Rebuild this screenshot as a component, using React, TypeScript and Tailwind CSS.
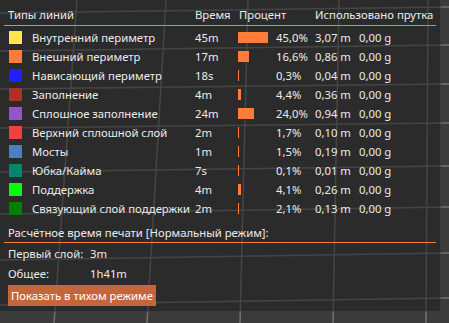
import React from 'react';

type Row = {
  color: string;
  label: string;
  time: string;
  pct: number;
  pctText: string;
  meters: string;
  grams: string;
};

const rows: Row[] = [
  { color: '#FFE64D', label: 'Внутренний периметр', time: '45m', pct: 45.0, pctText: '45,0%', meters: '3,07 m', grams: '0,00 g' },
  { color: '#FF7D38', label: 'Внешний периметр', time: '17m', pct: 16.6, pctText: '16,6%', meters: '0,86 m', grams: '0,00 g' },
  { color: '#1F1FFF', label: 'Нависающий периметр', time: '18s', pct: 0.3, pctText: '0,3%', meters: '0,04 m', grams: '0,00 g' },
  { color: '#B03029', label: 'Заполнение', time: '4m', pct: 4.4, pctText: '4,4%', meters: '0,36 m', grams: '0,00 g' },
  { color: '#9654CC', label: 'Сплошное заполнение', time: '24m', pct: 24.0, pctText: '24,0%', meters: '0,94 m', grams: '0,00 g' },
  { color: '#F04040', label: 'Верхний сплошной слой', time: '2m', pct: 1.7, pctText: '1,7%', meters: '0,10 m', grams: '0,00 g' },
  { color: '#4D80BA', label: 'Мосты', time: '1m', pct: 1.5, pctText: '1,5%', meters: '0,19 m', grams: '0,00 g' },
  { color: '#00876E', label: 'Юбка/Кайма', time: '7s', pct: 0.1, pctText: '0,1%', meters: '0,01 m', grams: '0,00 g' },
  { color: '#00FF00', label: 'Поддержка', time: '4m', pct: 4.1, pctText: '4,1%', meters: '0,26 m', grams: '0,00 g' },
  { color: '#008000', label: 'Связующий слой поддержки', time: '2m', pct: 2.1, pctText: '2,1%', meters: '0,13 m', grams: '0,00 g' },
];

// bed grid seen through the overlay
const gridLines = [
  [77, 0, 54, 323],
  [166, 0, 147, 323],
  [248, 0, 240, 323],
  [339, 0, 333, 323],
  [428, 0, 426, 323],
  [0, 13, 449, 7],
  [0, 51, 449, 45],
  [0, 89, 449, 84],
  [0, 128, 449, 123],
  [0, 172, 449, 166],
  [0, 214, 449, 207],
  [0, 260, 449, 253],
  [0, 305, 449, 298],
];

const cols = 'grid grid-cols-[187px_43px_38px_39px_44px_auto] items-center';

export default function App() {
  return (
    <div
      className="relative w-[449px] h-[323px] overflow-hidden bg-[#3b3b3b] text-[11.3px] text-[#ebebeb] whitespace-nowrap"
      style={{ fontFamily: '"Noto Sans", "DejaVu Sans", sans-serif' }}
    >
      <svg className="absolute inset-0" width="449" height="323">
        {gridLines.map(([x1, y1, x2, y2], i) => (
          <line key={i} x1={x1} y1={y1} x2={x2} y2={y2} stroke="#727272" strokeWidth="1.5" />
        ))}
      </svg>

      <div className="relative w-[441px] h-[312px] bg-[rgba(28,28,28,0.52)] border-r border-b border-[rgba(255,255,255,0.08)] pt-[5px] px-[4px]">
        <div className={`${cols} h-[19px] pl-[4px] leading-[19px]`}>
          <span>Типы линий</span>
          <span>Время</span>
          <span className="col-span-2 pl-[1px]">Процент</span>
          <span className="col-span-2">Использовано прутка</span>
        </div>
        <div className="mt-[1px] h-px bg-[#ff7d38]" />

        <div className="mt-[2px] pl-[4px]">
          {rows.map((r) => (
            <div key={r.label} className={`${cols} h-[19px] leading-[19px]`}>
              <div className="flex items-center">
                <span className="ml-[1px] w-[13px] h-[13px] shrink-0" style={{ backgroundColor: r.color }} />
                <span className="ml-[10px]">{r.label}</span>
              </div>
              <span>{r.time}</span>
              <div className="flex items-center h-full">
                <span className="h-[11px] bg-[#ff7d38]" style={{ width: Math.max(1, r.pct * 0.667) }} />
              </div>
              <span>{r.pctText}</span>
              <span>{r.meters}</span>
              <span>{r.grams}</span>
            </div>
          ))}
        </div>

        <div className="mt-[5px] h-[19px] leading-[19px] pl-[4px]">Расчётное время печати [Нормальный режим]:</div>
        <div className="h-px bg-[#ff7d38]" />

        <div className="pl-[4px]">
          <div className="mt-[1px] flex h-[19px] leading-[19px]">
            <span className="w-[82px]">Первый слой:</span>
            <span>3m</span>
          </div>
          <div className="mt-[1px] flex h-[19px] leading-[19px]">
            <span className="w-[82px]">Общее:</span>
            <span>1h41m</span>
          </div>
          <button className="mt-[2px] h-[21px] px-[3px] bg-[#c5663a] text-white leading-[21px] text-[11.3px]">
            Показать в тихом режиме
          </button>
        </div>
      </div>
    </div>
  );
}
